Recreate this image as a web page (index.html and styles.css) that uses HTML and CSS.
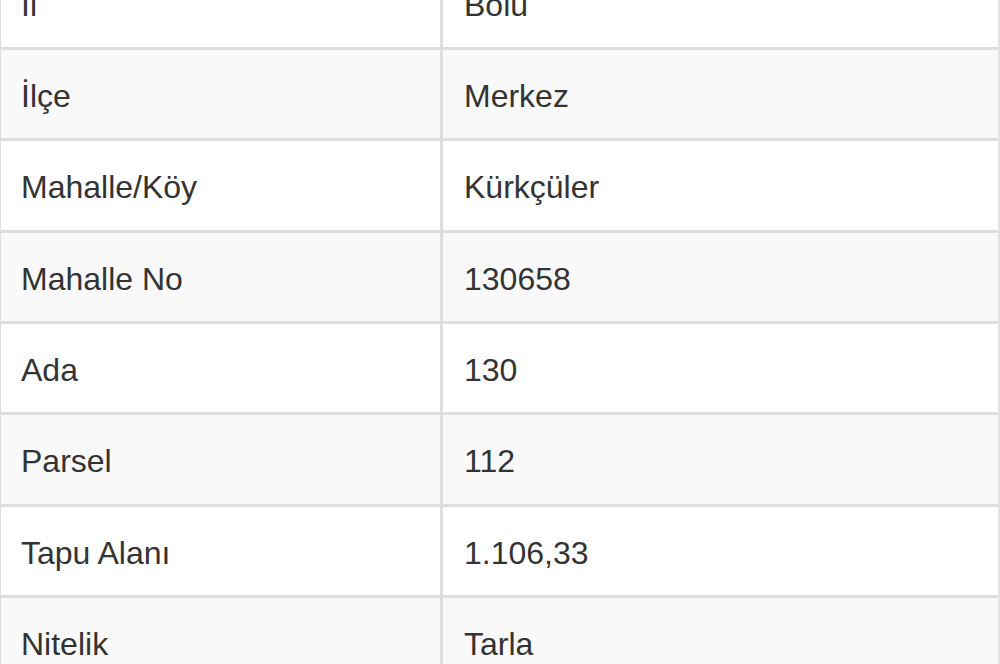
FILE: index.html
```html
<!DOCTYPE html>
<html lang="tr">
<head>
<meta charset="utf-8">
<title>Tapu Bilgileri</title>
<link rel="stylesheet" href="styles.css">
</head>
<body>
<div class="info-table">
  <div class="row"><div class="key">İl</div><div class="val">Bolu</div></div>
  <div class="row striped"><div class="key">İlçe</div><div class="val">Merkez</div></div>
  <div class="row"><div class="key">Mahalle/Köy</div><div class="val">Kürkçüler</div></div>
  <div class="row striped"><div class="key">Mahalle No</div><div class="val">130658</div></div>
  <div class="row"><div class="key">Ada</div><div class="val">130</div></div>
  <div class="row striped"><div class="key">Parsel</div><div class="val">112</div></div>
  <div class="row"><div class="key">Tapu Alanı</div><div class="val">1.106,33</div></div>
  <div class="row striped"><div class="key">Nitelik</div><div class="val">Tarla</div></div>
</div>
</body>
</html>
```
FILE: styles.css
```css
html, body {
  margin: 0;
  padding: 0;
  background: #fff;
  overflow: hidden;
}
body {
  font-family: "Liberation Sans", Arial, Helvetica, sans-serif;
  font-size: 32px;
  color: #333;
}
.info-table {
  margin-top: -44.33px;
  border-left: 1px solid #ddd;
  border-right: 2px solid #e3e3e3;
}
.row {
  display: grid;
  grid-template-columns: 442px 1fr;
  height: 91.33px;
  box-sizing: border-box;
  border-top: 3px solid #dedede;
  background: #fff;
}
.row.striped {
  background: #f9f9f9;
}
.key, .val {
  display: flex;
  align-items: center;
  padding-left: 20px;
  padding-top: 5px;
}
.key {
  border-right: 3px solid #dedede;
}
.val {
  padding-left: 21px;
}
```
